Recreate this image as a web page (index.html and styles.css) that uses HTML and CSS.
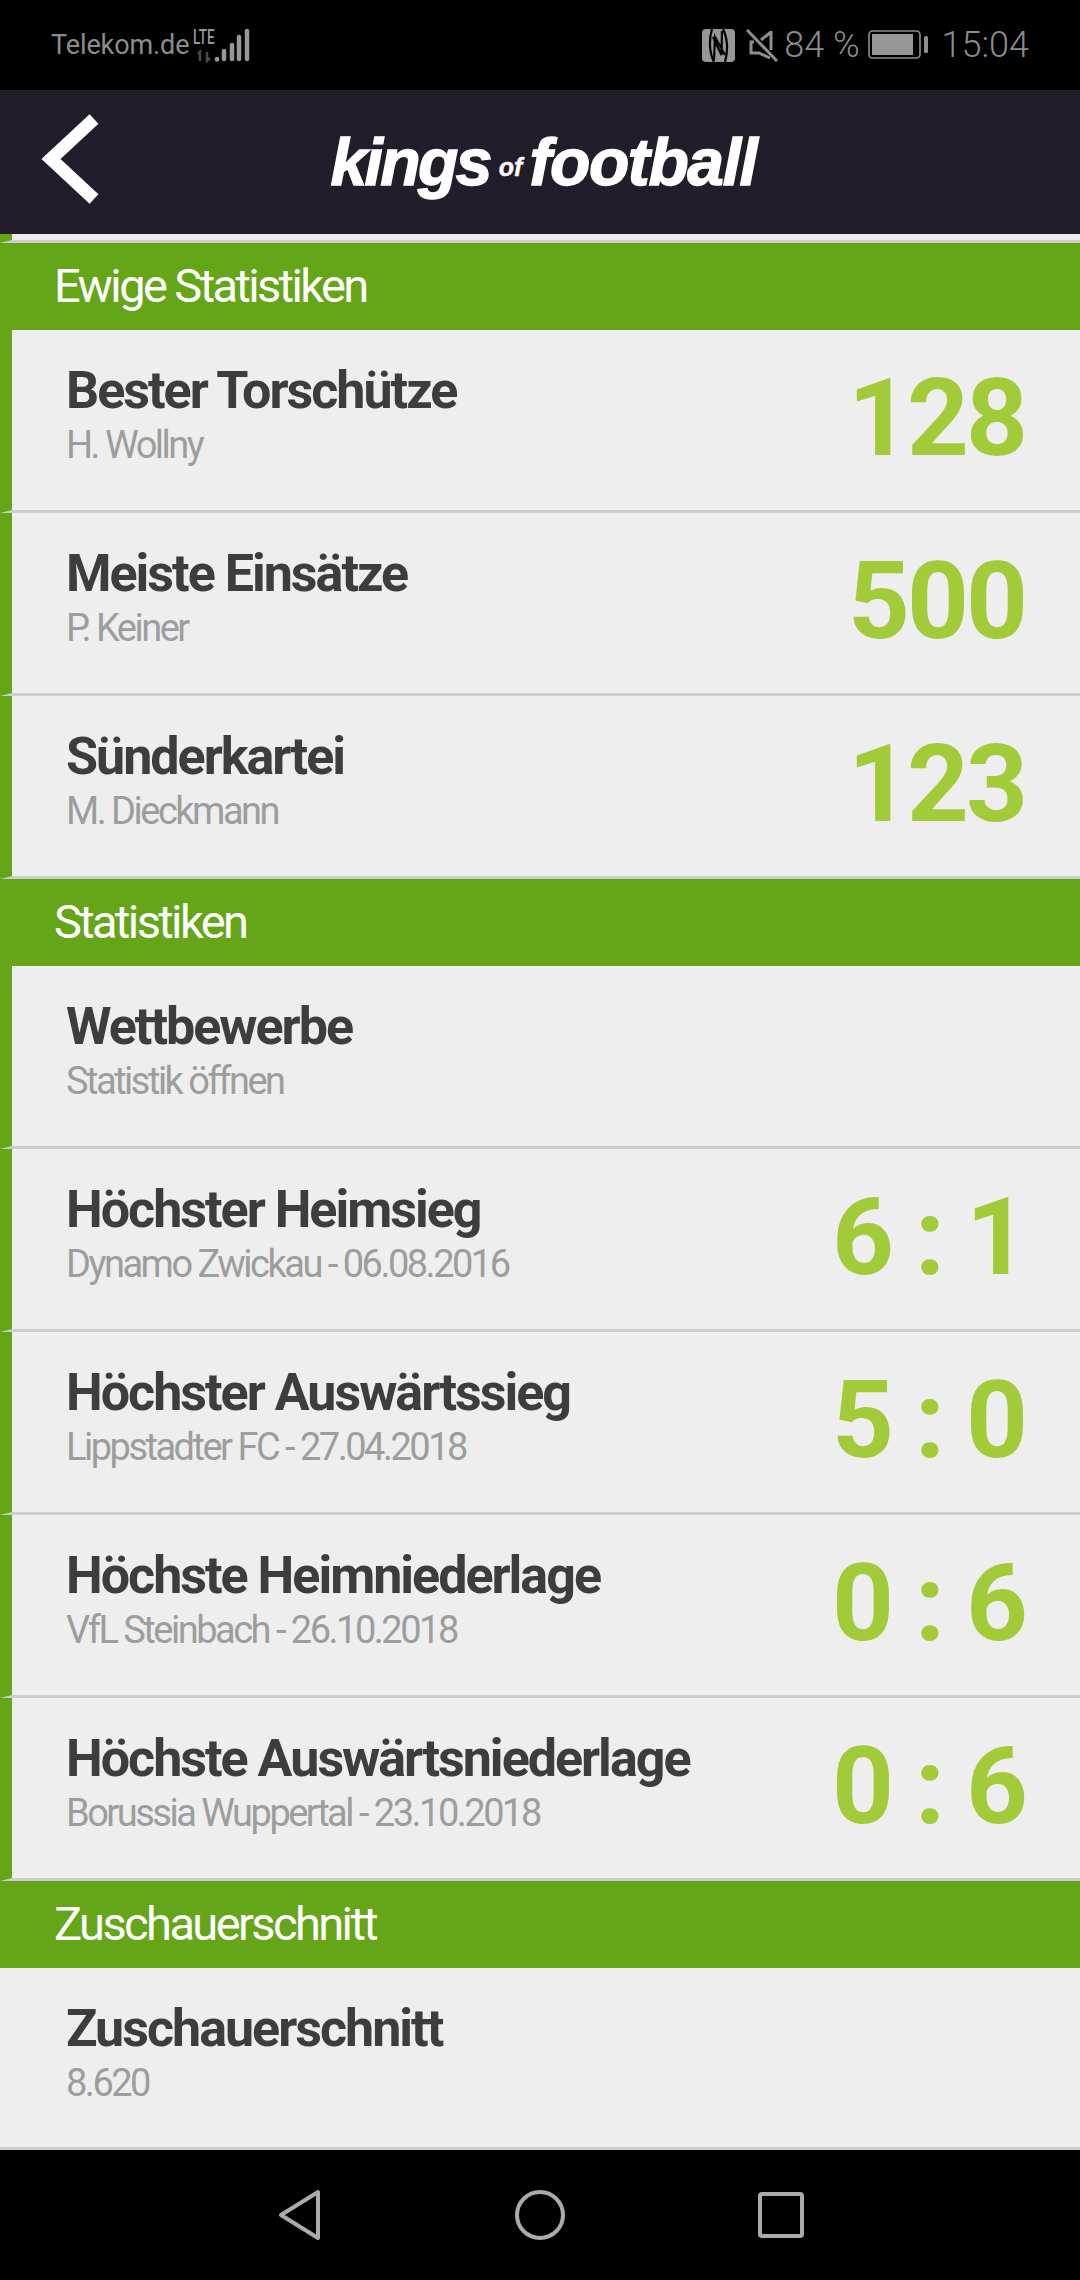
FILE: index.html
```html
<!DOCTYPE html>
<html lang="de">
<head>
<meta charset="utf-8">
<title>Kings of Football</title>
<link rel="stylesheet" href="styles.css">
</head>
<body>
<div class="screen">
  <div class="statusbar">
    <div class="status-left">
      <span class="carrier">Telekom.de</span>
      <div class="net">
        <span class="lte">LTE</span>
        <svg class="signal" width="60" height="36" viewBox="0 0 60 36">
          <path d="M7 34V25l-2 2M14 25v9l3-3" fill="none" stroke="#4a4a4a" stroke-width="2.5"/>
          <g fill="none" stroke="#979797" stroke-width="4.5" stroke-linecap="round">
            <path d="M24 32.5v-.5"/><path d="M31 32v-8"/><path d="M39 32v-14"/><path d="M46 32v-22"/><path d="M54 32v-28"/>
          </g>
        </svg>
      </div>
    </div>
    <div class="status-right">
      <svg class="ic-nfc" width="33" height="33" viewBox="0 0 33 33">
        <rect width="33" height="33" rx="4" fill="#979797"/>
        <path d="M10 0C7 10 7 23 12 33M12 31L13 8l10 18M21 0C26 10 26 23 23 33M20 2l-.5 24L11 8" fill="none" stroke="#000" stroke-width="2.2"/>
      </svg>
      <svg class="ic-mute" width="32" height="33" viewBox="0 0 32 33">
        <path d="M1 1l30 31" stroke="#8f8f8f" stroke-width="3" fill="none"/>
        <path d="M25 2v19M25 3l-10 8M8 13H5v11h8l11 5" stroke="#8f8f8f" stroke-width="3" fill="none"/>
      </svg>
      <span class="pct">84 %</span>
      <svg class="ic-batt" width="60" height="30" viewBox="0 0 60 30">
        <rect x="1" y="1" width="51" height="27" rx="3.5" fill="none" stroke="#8f8f8f" stroke-width="1.6"/>
        <rect x="4" y="4" width="41" height="21" fill="#979797"/>
        <rect x="56" y="6" width="4" height="17" rx="1.5" fill="#8f8f8f"/>
      </svg>
      <span class="clock">15:04</span>
    </div>
  </div>

  <header class="appbar">
    <svg class="back" width="60" height="92" viewBox="0 0 60 92">
      <path d="M53 6L10 46l43 40" fill="none" stroke="#fff" stroke-width="13"/>
    </svg>
    <div class="logo"><span>kings</span><span class="logo-of">of</span><span class="logo-football">football</span></div>
  </header>

  <main class="list">
    <div class="sliver"></div>

    <div class="section">Ewige Statistiken</div>
    <div class="row">
      <div class="labels"><div class="title">Bester Torschütze</div><div class="sub">H. Wollny</div></div>
      <div class="value">128</div>
    </div>
    <div class="row">
      <div class="labels"><div class="title">Meiste Einsätze</div><div class="sub">P. Keiner</div></div>
      <div class="value">500</div>
    </div>
    <div class="row">
      <div class="labels"><div class="title">Sünderkartei</div><div class="sub">M. Dieckmann</div></div>
      <div class="value">123</div>
    </div>

    <div class="section">Statistiken</div>
    <div class="row">
      <div class="labels"><div class="title">Wettbewerbe</div><div class="sub">Statistik öffnen</div></div>
    </div>
    <div class="row">
      <div class="labels"><div class="title">Höchster Heimsieg</div><div class="sub">Dynamo Zwickau - 06.08.2016</div></div>
      <div class="value">6 : 1</div>
    </div>
    <div class="row">
      <div class="labels"><div class="title">Höchster Auswärtssieg</div><div class="sub">Lippstadter FC - 27.04.2018</div></div>
      <div class="value">5 : 0</div>
    </div>
    <div class="row">
      <div class="labels"><div class="title">Höchste Heimniederlage</div><div class="sub">VfL Steinbach - 26.10.2018</div></div>
      <div class="value">0 : 6</div>
    </div>
    <div class="row">
      <div class="labels"><div class="title">Höchste Auswärtsniederlage</div><div class="sub">Borussia Wuppertal - 23.10.2018</div></div>
      <div class="value">0 : 6</div>
    </div>

    <div class="section">Zuschauerschnitt</div>
    <div class="row row-plain">
      <div class="labels"><div class="title">Zuschauerschnitt</div><div class="sub">8.620</div></div>
    </div>
  </main>

  <nav class="navbar">
    <svg width="44" height="52" viewBox="0 0 44 52">
      <path d="M40 3v46L3 26z" fill="none" stroke="#ababab" stroke-width="4" stroke-linejoin="round"/>
    </svg>
    <svg width="50" height="50" viewBox="0 0 50 50">
      <circle cx="25" cy="25" r="23" fill="none" stroke="#ababab" stroke-width="4"/>
    </svg>
    <svg width="46" height="46" viewBox="0 0 46 46">
      <rect x="2" y="2" width="42" height="42" rx="2" fill="none" stroke="#ababab" stroke-width="4"/>
    </svg>
  </nav>
</div>
</body>
</html>
```

FILE: styles.css
```css
* { box-sizing: border-box; }
html, body { margin: 0; padding: 0; }
body { background: #000; font-family: Roboto, "Liberation Sans", sans-serif; }

.screen { width: 1080px; height: 2280px; overflow: hidden; display: flex; flex-direction: column; }

/* status bar */
.statusbar { height: 90px; background: #000; display: flex; justify-content: space-between; align-items: center; padding: 0 51px 0 51px; color: #8c8c8c; }
.status-left, .status-right { display: flex; align-items: center; }
.carrier { width: 142px; font-size: 27px; letter-spacing: -0.1px; white-space: nowrap; }
.net { position: relative; width: 60px; height: 36px; }
.lte { position: absolute; left: 0; top: 0; font-size: 20px; line-height: 20px; font-weight: 500; color: #979797; transform: scaleX(0.68); transform-origin: left top; }
.signal { position: absolute; left: 0; top: 0; }
.ic-nfc { margin-right: 11px; }
.ic-mute { margin-right: 6px; }
.pct { font-size: 36px; font-weight: 300; margin-right: 8px; white-space: nowrap; }
.ic-batt { margin-right: 14px; }
.clock { font-size: 36px; font-weight: 300; }

/* app bar */
.appbar { position: relative; height: 144px; background: #231c2b; display: flex; align-items: center; justify-content: center; padding-left: 7px; }
.back { position: absolute; left: 41px; top: 23px; }
.logo { display: flex; align-items: center; font-family: "Liberation Sans", Arial, sans-serif; font-weight: 700; font-style: italic; font-size: 66px; letter-spacing: -2.6px; color: #fff; -webkit-text-stroke: 1.4px #fff; }
.logo-football { letter-spacing: -1.4px; }
.logo-of { font-size: 25px; letter-spacing: 0; -webkit-text-stroke: 0.4px #fff; margin: 10px 7px 0 9px; }

/* list */
.list { flex: 1; background: #eee; }
.sliver { height: 9px; border-left: 12px solid #65a518; border-bottom: 3px solid #ccc; }
.section { height: 87px; background: #65a518; color: #fff; font-size: 47px; font-weight: 400; letter-spacing: -2.6px; line-height: 86px; padding-left: 54px; }
.row { height: 183px; background: #eee; border-left: 12px solid #65a518; border-bottom: 3px solid #ccc; display: flex; justify-content: space-between; align-items: center; padding: 0 55px 0 54px; }
.row-plain { border-left: 0; height: 182px; padding-left: 66px; }
.labels { align-self: flex-start; padding-top: 31px; }
.title { font-size: 52px; line-height: 60px; font-weight: 700; letter-spacing: -2px; color: #3c3d3f; white-space: nowrap; }
.sub { margin-top: 3px; font-size: 38px; line-height: 42px; font-weight: 400; letter-spacing: -2.5px; color: #9d9d9d; white-space: nowrap; }
.value { margin-bottom: 4px; font-size: 108px; line-height: 108px; font-weight: 700; letter-spacing: -3px; color: #a2cb3a; white-space: pre; }

/* nav bar */
.navbar { height: 130px; background: #000; display: flex; gap: 193px; align-items: center; padding-left: 278px; }
```
